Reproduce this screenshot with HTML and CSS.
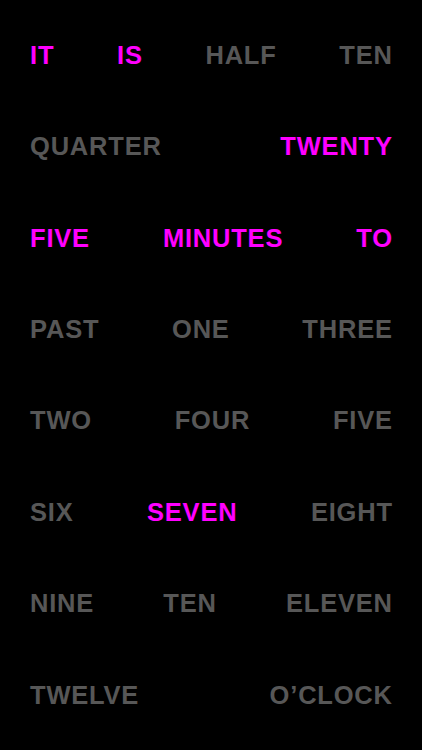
FILE: index.html
```html
<!DOCTYPE html>
<html>
<head>
<meta charset="utf-8">
<link rel="stylesheet" href="styles.css">
</head>
<body>
<main class="clock">
  <div class="row"><span class="on">IT</span><span class="on">IS</span><span>HALF</span><span>TEN</span></div>
  <div class="row"><span>QUARTER</span><span class="on">TWENTY</span></div>
  <div class="row"><span class="on">FIVE</span><span class="on">MINUTES</span><span class="on">TO</span></div>
  <div class="row"><span>PAST</span><span>ONE</span><span>THREE</span></div>
  <div class="row"><span>TWO</span><span>FOUR</span><span>FIVE</span></div>
  <div class="row"><span>SIX</span><span class="on">SEVEN</span><span>EIGHT</span></div>
  <div class="row"><span>NINE</span><span>TEN</span><span>ELEVEN</span></div>
  <div class="row"><span>TWELVE</span><span>O’CLOCK</span></div>
</main>
</body>
</html>
```

FILE: styles.css
```css
html, body {
  margin: 0;
  padding: 0;
  background: #000;
}
.clock {
  box-sizing: border-box;
  width: 422px;
  height: 750px;
  padding: 10px 30px 9px 30px;
  display: flex;
  flex-direction: column;
  font-family: "Liberation Sans", Arial, sans-serif;
  font-weight: bold;
  font-size: 25.5px;
  letter-spacing: 0.8px;
  color: #575757;
}
.row {
  flex: 1;
  display: flex;
  justify-content: space-between;
  align-items: center;
  line-height: 1;
}
.row span {
  margin-right: -0.8px;
}
.wide {
  letter-spacing: 1.4px;
}
.on {
  color: #ff00ff;
}
```
